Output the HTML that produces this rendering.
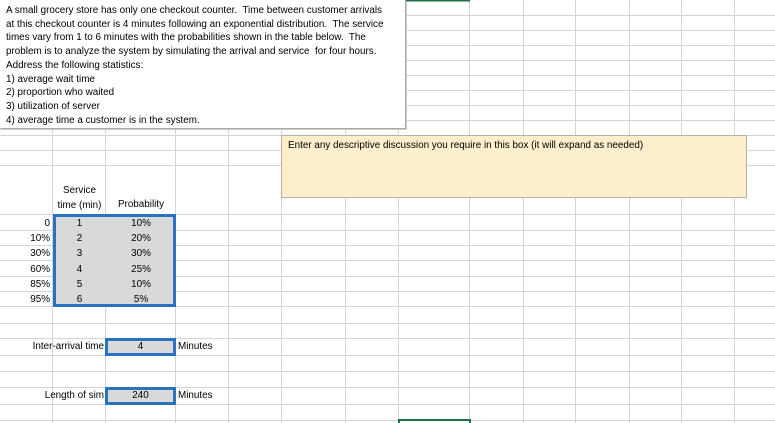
<!DOCTYPE html>
<html><head><meta charset="utf-8"><style>
*{margin:0;padding:0;box-sizing:border-box}
body{width:775px;height:423px;overflow:hidden;background:#fff;position:relative;font-family:"Liberation Sans",sans-serif;color:#000}
.t{position:absolute;font-size:9.9px;white-space:pre;line-height:11px}
.r{text-align:right}.c{text-align:center}
</style></head><body>
<svg width="775" height="423" style="position:absolute;left:0;top:0">
<g stroke="#d4d4d4" stroke-width="1" shape-rendering="crispEdges">
<line x1="0" y1="15.5" x2="775" y2="15.5"/><line x1="0" y1="30.5" x2="775" y2="30.5"/><line x1="0" y1="45.5" x2="775" y2="45.5"/><line x1="0" y1="60.5" x2="775" y2="60.5"/><line x1="0" y1="75.5" x2="775" y2="75.5"/><line x1="0" y1="90.5" x2="775" y2="90.5"/><line x1="0" y1="105.5" x2="775" y2="105.5"/><line x1="0" y1="120.5" x2="775" y2="120.5"/><line x1="0" y1="135.5" x2="775" y2="135.5"/><line x1="0" y1="150.5" x2="775" y2="150.5"/><line x1="0" y1="165.5" x2="775" y2="165.5"/><line x1="0" y1="214.5" x2="775" y2="214.5"/><line x1="0" y1="230.5" x2="775" y2="230.5"/><line x1="0" y1="245.5" x2="775" y2="245.5"/><line x1="0" y1="260.5" x2="775" y2="260.5"/><line x1="0" y1="276.5" x2="775" y2="276.5"/><line x1="0" y1="291.5" x2="775" y2="291.5"/><line x1="0" y1="306.5" x2="775" y2="306.5"/><line x1="0" y1="323.5" x2="775" y2="323.5"/><line x1="0" y1="338.5" x2="775" y2="338.5"/><line x1="0" y1="355.5" x2="775" y2="355.5"/><line x1="0" y1="371.5" x2="775" y2="371.5"/><line x1="0" y1="387.5" x2="775" y2="387.5"/><line x1="0" y1="404.5" x2="775" y2="404.5"/><line x1="0" y1="420.5" x2="775" y2="420.5"/>
<line x1="52.5" y1="0" x2="52.5" y2="423"/><line x1="105.5" y1="0" x2="105.5" y2="423"/><line x1="175.5" y1="0" x2="175.5" y2="423"/><line x1="228.5" y1="0" x2="228.5" y2="423"/><line x1="281.5" y1="0" x2="281.5" y2="423"/><line x1="345.5" y1="0" x2="345.5" y2="423"/><line x1="398.5" y1="0" x2="398.5" y2="423"/><line x1="469.5" y1="0" x2="469.5" y2="423"/><line x1="523.5" y1="0" x2="523.5" y2="423"/><line x1="575.5" y1="0" x2="575.5" y2="423"/><line x1="629.5" y1="0" x2="629.5" y2="423"/><line x1="681.5" y1="0" x2="681.5" y2="423"/><line x1="734.5" y1="0" x2="734.5" y2="423"/>
</g>
<line x1="406" y1="0.5" x2="470" y2="0.5" stroke="#1e7145" stroke-width="2"/>
<rect x="399" y="420" width="71" height="4" fill="none" stroke="#1e7145" stroke-width="2"/>
</svg>
<div style="position:absolute;left:0;top:0;width:406px;height:129px;background:#fff;border-right:1px solid #aaa;border-bottom:1px solid #aaa;box-shadow:1px 1px 0 #ccc"></div>
<div class="t" style="left:6px;top:4px;line-height:13.7px">A small grocery store has only one checkout counter.  Time between customer arrivals
at this checkout counter is 4 minutes following an exponential distribution.  The service
times vary from 1 to 6 minutes with the probabilities shown in the table below.  The
problem is to analyze the system by simulating the arrival and service  for four hours.
Address the following statistics:
1) average wait time
2) proportion who waited
3) utilization of server
4) average time a customer is in the system.</div>
<div style="position:absolute;left:281px;top:135px;width:466px;height:63px;background:#fdefcc;border:1px solid #b8b0a0"></div>
<div class="t" style="left:288px;top:140px">Enter any descriptive discussion you require in this box (it will expand as needed)</div>
<div class="t c" style="left:53px;width:53px;top:184px;line-height:14.5px">Service
time (min)</div>
<div class="t c" style="left:106px;width:70px;top:199px">Probability</div>
<div style="position:absolute;left:53px;top:214px;width:123px;height:93px;background:#d9d9d9;border:3px solid #2a72c0"></div>
<div class="t r" style="left:0;width:50px;top:216px;line-height:15.2px">0
10%
30%
60%
85%
95%</div>
<div class="t c" style="left:53px;width:53px;top:216px;line-height:15.2px">1
2
3
4
5
6</div>
<div class="t c" style="left:106px;width:70px;top:216px;line-height:15.2px">10%
20%
30%
25%
10%
5%</div>
<div class="t r" style="left:0;width:104px;top:341px">Inter-arrival time</div>
<div style="position:absolute;left:105px;top:338px;width:71px;height:18px;background:#d9d9d9;border:3px solid #2a72c0"></div>
<div class="t c" style="left:105px;width:71px;top:341px">4</div>
<div class="t" style="left:178px;top:341px">Minutes</div>
<div class="t r" style="left:0;width:104px;top:390px">Length of sim</div>
<div style="position:absolute;left:105px;top:387px;width:71px;height:18px;background:#d9d9d9;border:3px solid #2a72c0"></div>
<div class="t c" style="left:105px;width:71px;top:390px">240</div>
<div class="t" style="left:178px;top:390px">Minutes</div>
</body></html>
